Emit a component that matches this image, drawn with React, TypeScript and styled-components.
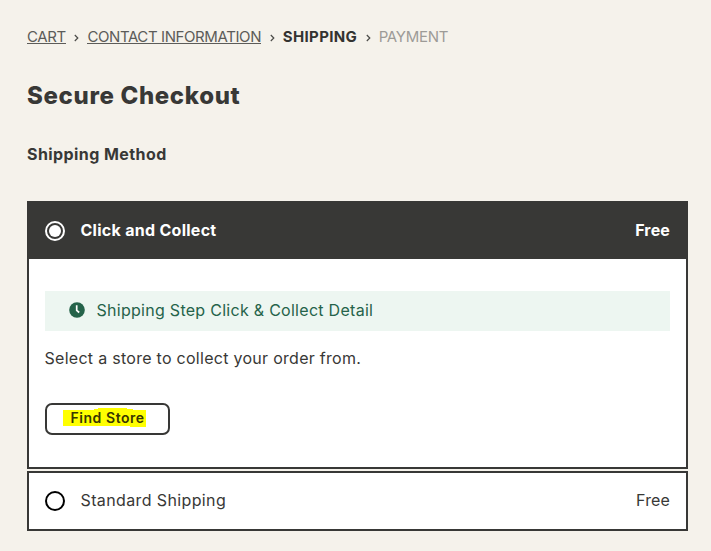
import React from 'react';
import styled, { createGlobalStyle } from 'styled-components';

const ink = '#383836';

const GlobalStyle = createGlobalStyle`
  * { box-sizing: border-box; }
  body {
    margin: 0;
    background: #f5f2eb;
    color: ${ink};
    font-family: Inter, "Liberation Sans", sans-serif;
    font-size: 16px;
  }
`;

const Page = styled.main`
  width: 711px;
  height: 551px;
  padding: 27px 23px 20px 27px;
  overflow: hidden;
`;

const Breadcrumbs = styled.nav`
  display: flex;
  height: 20px;
  line-height: 19px;
  font-size: 15px;
  white-space: nowrap;
`;

const Crumb = styled.span<{ $spacing: number; $width: number; $state: 'link' | 'current' | 'next' }>`
  flex: none;
  width: ${p => p.$width}px;
  letter-spacing: ${p => p.$spacing}px;
  color: ${p => (p.$state === 'link' ? '#5c5c59' : p.$state === 'current' ? '#333331' : '#9d9b97')};
  font-weight: ${p => (p.$state === 'current' ? 700 : 400)};
  border-bottom: ${p => (p.$state === 'link' ? '1px solid #5c5c59' : '0')};
  height: 17px;
`;

const Chevron = styled.svg`
  flex: none;
  width: 5px;
  height: 8px;
  margin: 7px 8px 0 8.4px;
  fill: none;
  stroke: #4b4b48;
  stroke-width: 1.2;
`;

const Title = styled.h1`
  margin: 34px 0 0;
  font-size: 24px;
  line-height: 30px;
  font-weight: 800;
  letter-spacing: 0.65px;
`;

const Subtitle = styled.h2`
  margin: 33px 0 0;
  font-size: 16px;
  line-height: 20px;
  font-weight: 700;
  letter-spacing: 0.42px;
`;

const Methods = styled.div`
  display: flex;
  flex-direction: column;
  gap: 2px;
  margin-top: 37px;
`;

const Method = styled.section`
  width: 661px;
  border: 2px solid ${ink};
  background: #fff;
`;

const MethodRow = styled.label<{ $active?: boolean }>`
  display: flex;
  align-items: center;
  height: 56px;
  padding: 0 16px 2px;
  background: ${p => (p.$active ? ink : '#fff')};
  color: ${p => (p.$active ? '#fff' : ink)};
  font-weight: ${p => (p.$active ? 700 : 400)};
  letter-spacing: ${p => (p.$active ? 0.28 : 0.38)}px;
`;

const Radio = styled.svg`
  width: 20px;
  height: 20px;
  margin: 2px 15.5px 0 0;
`;

const Price = styled.span`
  margin-left: auto;
  letter-spacing: 0.15px;
`;

const Details = styled.div`
  height: 208px;
  padding: 32px 16px;
`;

const Notice = styled.div`
  display: flex;
  align-items: center;
  height: 40px;
  padding: 0 0 2px 24px;
  background: #edf6f1;
  color: #25634a;
  letter-spacing: 0.28px;
`;

const Clock = styled.svg`
  width: 16px;
  height: 16px;
  margin: 0 11.5px 0 0;
`;

const Hint = styled.p`
  margin: 17px 0 0 -0.5px;
  line-height: 20px;
  letter-spacing: 0.28px;
`;

const StoreButton = styled.button`
  display: flex;
  align-items: center;
  width: 125px;
  height: 32px;
  margin-top: 35px;
  padding: 0 0 2px 16px;
  border: 2px solid ${ink};
  border-radius: 7px;
  background: #fff;
  color: #383600;
  font: 600 14px Inter, sans-serif;
  letter-spacing: 0.55px;
  text-align: left;
`;

const Marker = styled.span`
  position: relative;
  display: block;
  width: 83px;
  padding-left: 7.5px;
  line-height: 19px;
  white-space: nowrap;
`;

const MarkerInk = styled.svg`
  position: absolute;
  left: 0;
  top: -1px;
  width: 83px;
  height: 20px;
  fill: #ffff00;
`;

const Label = styled.span`
  position: relative;
  top: -1px;
`;

const Separator = () => (
  <Chevron viewBox="0 0 5 8"><path d="M.8 1 3.8 4 .8 7" /></Chevron>
);

export default function App() {
  return (
    <Page>
      <GlobalStyle />
      <Breadcrumbs>
        <Crumb $state="link" $width={39} $spacing={-0.4}>CART</Crumb>
        <Separator />
        <Crumb $state="link" $width={174} $spacing={-0.4}>CONTACT INFORMATION</Crumb>
        <Separator />
        <Crumb $state="current" $width={74.5} $spacing={0.35}>SHIPPING</Crumb>
        <Separator />
        <Crumb $state="next" $width={70} $spacing={-0.3}>PAYMENT</Crumb>
      </Breadcrumbs>
      <Title>Secure Checkout</Title>
      <Subtitle>Shipping Method</Subtitle>
      <Methods>
        <Method>
          <MethodRow $active>
            <Radio viewBox="0 0 20 20">
              <circle cx="10" cy="10" r="9" fill="none" stroke="#fff" strokeWidth="2" />
              <circle cx="10" cy="10" r="6" fill="#fff" />
            </Radio>
            <span>Click and Collect</span>
            <Price>Free</Price>
          </MethodRow>
          <Details>
            <Notice>
              <Clock viewBox="0 0 16 16">
                <circle cx="8" cy="8" r="7.8" fill="#25634a" />
                <path d="M7.7 3.2V8.4L10.2 10.5" fill="none" stroke="#fff" strokeWidth="1.7" />
              </Clock>
              <span>Shipping Step Click &amp; Collect Detail</span>
            </Notice>
            <Hint>Select a store to collect your order from.</Hint>
            <StoreButton>
              <Marker>
                <MarkerInk viewBox="0 0 83 20">
                  <path d="M0 2H31V1H35V0H64V1H70V2H83V19H67V18H39V18H0Z" />
                </MarkerInk>
                <Label>Find Store</Label>
              </Marker>
            </StoreButton>
          </Details>
        </Method>
        <Method>
          <MethodRow>
            <Radio viewBox="0 0 20 20">
              <circle cx="10" cy="10" r="9" fill="#fff" stroke="#000" strokeWidth="2" />
            </Radio>
            <span>Standard Shipping</span>
            <Price>Free</Price>
          </MethodRow>
        </Method>
      </Methods>
    </Page>
  );
}
